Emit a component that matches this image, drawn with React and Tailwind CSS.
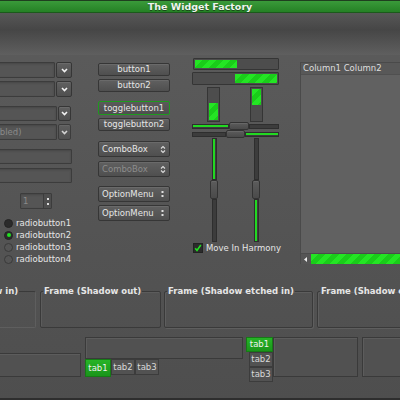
import React from "react"

const btn = "border border-[#363636] rounded-[2px] bg-[linear-gradient(#606060,#4f4f4f)] shadow-[inset_0_1px_0_#6a6a6a]"
const entry = "border border-[#3c3c3c] rounded-[1px] bg-[#555555] shadow-[inset_0_1px_2px_#474747]"
const green = "bg-[repeating-linear-gradient(135deg,#24e524_0_5px,#1acd1a_5px_10px)]"
const knob = "rounded-[2px] border border-[#333] bg-[linear-gradient(#5c5c5c,#4a4a4a)] shadow-[inset_0_1px_0_#676767]"

const Chevron = () => (
  <svg width="7" height="5" viewBox="0 0 7 5"><path d="M1 1l2.5 2.5L6 1" stroke="#f2f2f2" strokeWidth="1.6" fill="none" /></svg>
)

const UpDown = () => (
  <svg width="6" height="9" viewBox="0 0 6 9"><path d="M1 3.5l2-2 2 2M1 5.5l2 2 2-2" stroke="#dcdcdc" strokeWidth="1.1" fill="none" /></svg>
)

const Dots = () => (
  <svg width="3" height="8" viewBox="0 0 3 8"><rect x="0.5" y="1" width="2" height="2" fill="#e0e0e0" /><rect x="0.5" y="5" width="2" height="2" fill="#e0e0e0" /></svg>
)

function Combo({ className, text, disabled, btnW = "w-[16px]" }) {
  return (
    <div className={`flex gap-[1px] ${className}`}>
      <div className={`-ml-[30px] flex-1 flex items-center pl-[7px] text-[8.5px] text-[#8a8a8a] whitespace-nowrap ${entry}`}>{text}</div>
      <div className={`${btnW} shrink-0 flex items-center justify-center ${btn} ${disabled ? "opacity-80" : ""}`}><Chevron /></div>
    </div>
  )
}

function Radio({ label, state }) {
  const circle = state ? "bg-[#2b2b2b] border-[#242424]" : "bg-[#555555] border-[#3a3a3a]"
  return (
    <div className="h-[12px] flex items-center gap-[3px] pl-[4px]">
      <div className={`w-[9px] h-[9px] rounded-full border flex items-center justify-center ${circle}`}>
        {state === "dot" && <div className="w-[4px] h-[4px] rounded-full bg-[#22e022]" />}
      </div>
      <span className="text-[8.5px] leading-none">{label}</span>
    </div>
  )
}

function Frame({ label, className, kind }) {
  const border =
    kind === "in"
      ? "border-t-[#3a3a3a] border-l-[#3a3a3a] border-b-[#5e5e5e] border-r-[#5e5e5e]"
      : kind === "out"
      ? "border-[#3a3a3a] shadow-[inset_1px_1px_0_#5c5c5c]"
      : "border-[#3a3a3a] shadow-[inset_1px_1px_0_#5e5e5e,1px_1px_0_#5e5e5e]"
  return (
    <fieldset className={`shrink-0 h-[43px] border rounded-[2px] ${border} ${className}`}>
      <legend className="ml-[2px] px-[1px] text-[8.5px] font-bold leading-[12px] text-[#e6e6e6] whitespace-nowrap">{label}</legend>
    </fieldset>
  )
}

const panel = "shrink-0 border border-[#3a3a3a] bg-[#515151] shadow-[inset_1px_1px_0_#5c5c5c]"
const tabOn = "flex items-center justify-center bg-[linear-gradient(#27b427,#1a951a)] border border-[#167a16] text-[#f0f0f0]"
const tabOff = "flex items-center justify-center bg-[#525252] border border-[#3c3c3c] text-[#d8d8d8]"

export default function App() {
  return (
    <div className="w-[400px] h-[400px] overflow-hidden flex flex-col bg-[linear-gradient(#5c5c5c,#4e4e4e)] text-[#e6e6e6] font-['DejaVu_Sans',sans-serif]">
      <div className="h-[13px] shrink-0 flex items-center justify-center border-t border-[#1f3f1f] bg-[linear-gradient(#3a9a3a,#237f23)] shadow-[inset_0_-1px_0_#1b5a1b]">
        <span className="text-[9.5px] font-bold leading-none text-[#eef5ee] [text-shadow:0_1px_0_#1a4a1a]">The Widget Factory</span>
      </div>
      <div className="h-[42px] shrink-0 bg-[linear-gradient(#575757,#464646_40%,#5f5f5f)]" />

      <div className="h-[230px] shrink-0 flex items-start">
        <div className="w-[72px] shrink-0 flex flex-col">
          <Combo className="mt-[7px] h-[16px]" />
          <Combo className="mt-[3px] h-[16px]" />
          <Combo className="mt-[9px] h-[15px] w-[71px]" btnW="w-[13px]" />
          <Combo className="mt-[3px] h-[16px] w-[71px]" btnW="w-[13px]" text="(Disabled)" disabled />
          <div className={`mt-[9px] h-[15px] -ml-[30px] ${entry}`} />
          <div className={`mt-[4px] h-[15px] -ml-[30px] ${entry}`} />
          <div className={`mt-[10px] ml-[20px] w-[32px] h-[16px] flex ${entry}`}>
            <span className="flex-1 pl-[2px] text-[8.5px] leading-[14px] text-[#8a8a8a]">1</span>
            <div className="w-[8px] flex flex-col items-center justify-center gap-[3px] border-l border-[#3c3c3c] bg-[#4e4e4e]">
              <div className="w-[2px] h-[2px] bg-[#ddd]" />
              <div className="w-[2px] h-[2px] bg-[#ddd]" />
            </div>
          </div>
          <div className="mt-[8px] flex flex-col">
            <Radio label="radiobutton1" state="on" />
            <Radio label="radiobutton2" state="dot" />
            <Radio label="radiobutton3" />
            <Radio label="radiobutton4" />
          </div>
        </div>

        <div className="ml-[26px] w-[72px] shrink-0 flex flex-col text-[8.5px] leading-none">
          <div className={`mt-[8px] h-[13px] flex items-center justify-center ${btn}`}>button1</div>
          <div className={`mt-[3px] h-[13px] flex items-center justify-center ${btn}`}>button2</div>
          <div className="mt-[9px] h-[14px] flex items-center justify-center border border-[#1e9a1e] rounded-[2px] bg-[linear-gradient(#5a5a5a,#4e4e4e)]">togglebutton1</div>
          <div className={`mt-[3px] h-[13px] flex items-center justify-center ${btn}`}>togglebutton2</div>
          <div className={`mt-[10px] h-[16px] flex items-center justify-between px-[3px] ${btn}`}>ComboBox<UpDown /></div>
          <div className={`mt-[4px] h-[16px] flex items-center justify-between px-[3px] text-[#8c8c8c] ${btn}`}>ComboBox<UpDown /></div>
          <div className={`mt-[9px] h-[16px] flex items-center justify-between px-[3px] pr-[5px] ${btn}`}>OptionMenu<Dots /></div>
          <div className={`mt-[3px] h-[16px] flex items-center justify-between px-[3px] pr-[5px] ${btn}`}>OptionMenu<Dots /></div>
        </div>

        <div className="ml-[22px] w-[87px] shrink-0 flex flex-col">
          <div className="mt-[3px] ml-[1px] h-[12px] p-[1px] border border-[#353535] bg-[#4d4d4d] rounded-[1px]">
            <div className={`w-[42px] h-full ${green}`} />
          </div>
          <div className="mt-[2px] h-[13px] p-[1px] flex justify-end border border-[#353535] bg-[#4d4d4d] rounded-[1px]">
            <div className={`w-[42px] h-full ${green}`} />
          </div>
          <div className="mt-[2px] h-[35px] flex">
            <div className="ml-[15px] w-[13px] h-full p-[1px] flex flex-col justify-end border border-[#353535] bg-[#4d4d4d]">
              <div className={`h-[17px] ${green}`} />
            </div>
            <div className="ml-[30px] w-[13px] h-full p-[1px] border border-[#353535] bg-[#4d4d4d]">
              <div className={`h-[16px] ${green}`} />
            </div>
          </div>
          <div className="h-[8px] flex items-center">
            <div className="w-[37px] h-[5px] flex items-center border border-[#2e2e2e] bg-[#3c3c3c]"><div className="w-full h-[2px] bg-[#22d822]" /></div>
            <div className={`w-[20px] h-[8px] shrink-0 ${knob}`} />
            <div className="flex-1 h-[5px] border border-[#2e2e2e] bg-[#3c3c3c]" />
          </div>
          <div className="h-[8px] flex items-center">
            <div className="w-[34px] h-[5px] border border-[#2e2e2e] bg-[#3c3c3c]" />
            <div className={`w-[19px] h-[8px] shrink-0 ${knob}`} />
            <div className="flex-1 h-[5px] flex items-center border border-[#2e2e2e] bg-[#3c3c3c]"><div className="w-full h-[2px] bg-[#22d822]" /></div>
          </div>
          <div className="h-[104px] flex">
            <div className="ml-[18px] w-[8px] flex flex-col items-center">
              <div className="w-[5px] flex-1 flex justify-center border border-[#2e2e2e] bg-[#3c3c3c]"><div className="w-[2px] h-full bg-[#22d822]" /></div>
              <div className={`w-[8px] h-[19px] shrink-0 ${knob}`} />
              <div className="w-[5px] h-[43px] border border-[#2e2e2e] bg-[#3c3c3c]" />
            </div>
            <div className="ml-[34px] w-[8px] flex flex-col items-center">
              <div className="w-[5px] flex-1 border border-[#2e2e2e] bg-[#3c3c3c]" />
              <div className={`w-[8px] h-[19px] shrink-0 ${knob}`} />
              <div className="w-[5px] h-[43px] flex justify-center border border-[#2e2e2e] bg-[#3c3c3c]"><div className="w-[2px] h-full bg-[#22d822]" /></div>
            </div>
          </div>
          <div className="mt-[1px] ml-[1px] flex items-center gap-[3px]">
            <div className="w-[10px] h-[10px] border border-[#222] bg-[#2b2b2b] flex items-center justify-center">
              <svg width="8" height="8" viewBox="0 0 8 8"><path d="M1.2 4.2l1.8 2.3L6.8 1" stroke="#22e022" strokeWidth="1.6" fill="none" /></svg>
            </div>
            <span className="text-[8.5px] leading-none whitespace-nowrap">Move In Harmony</span>
          </div>
        </div>

        <div className="ml-[21px] mt-[7px] flex-1 h-[202px] flex flex-col border-l border-t border-[#4a4a4a] bg-[#616161]">
          <div className="h-[12px] flex items-center pl-[2px] bg-[#585858] border-b border-[#505050] text-[8.5px] leading-none text-[#dedede] whitespace-nowrap">Column1 Column2</div>
          <div className="flex-1" />
          <div className="h-[11px] flex items-center bg-[#555] border-t border-[#4c4c4c]">
            <svg className="ml-[3px]" width="3" height="5" viewBox="0 0 3 5"><path d="M3 0L0 2.5L3 5z" fill="#eee" /></svg>
            <div className={`ml-[4px] flex-1 h-[10px] ${green}`} />
          </div>
        </div>
      </div>

      <div className="h-[50px] shrink-0 flex">
        <Frame label="Frame (Shadow in)" kind="in" className="-ml-[76px] w-[112px]" />
        <Frame label="Frame (Shadow out)" kind="out" className="ml-[4px] w-[121px]" />
        <Frame label="Frame (Shadow etched in)" kind="etched" className="ml-[3px] w-[149px]" />
        <Frame label="Frame (Shadow etched out)" kind="etched" className="ml-[4px] w-[140px]" />
      </div>

      <div className="h-[62px] shrink-0 flex items-start text-[8.5px] leading-none">
        <div className={`mt-[18px] -ml-[10px] w-[91px] h-[24px] ${panel}`} />
        <div className="ml-[4px] w-[158px] shrink-0 flex flex-col">
          <div className={`mt-[2px] h-[22px] ${panel}`} />
          <div className="flex">
            <div className={`w-[26px] h-[18px] ${tabOn}`}>tab1</div>
            <div className={`w-[24px] h-[16px] ${tabOff}`}>tab2</div>
            <div className={`w-[24px] h-[16px] ${tabOff}`}>tab3</div>
          </div>
        </div>
        <div className="ml-[3px] mt-[2px] flex shrink-0">
          <div className="flex flex-col items-end">
            <div className={`w-[27px] h-[15px] ${tabOn}`}>tab1</div>
            <div className={`w-[24px] h-[15px] ${tabOff}`}>tab2</div>
            <div className={`w-[24px] h-[15px] ${tabOff}`}>tab3</div>
          </div>
          <div className={`w-[85px] h-[40px] ${panel}`} />
        </div>
        <div className={`ml-[4px] mt-[2px] w-[50px] h-[40px] ${panel}`} />
      </div>
      <div className="flex-1 border-b-2 border-[#2e2e2e]" />
    </div>
  )
}
